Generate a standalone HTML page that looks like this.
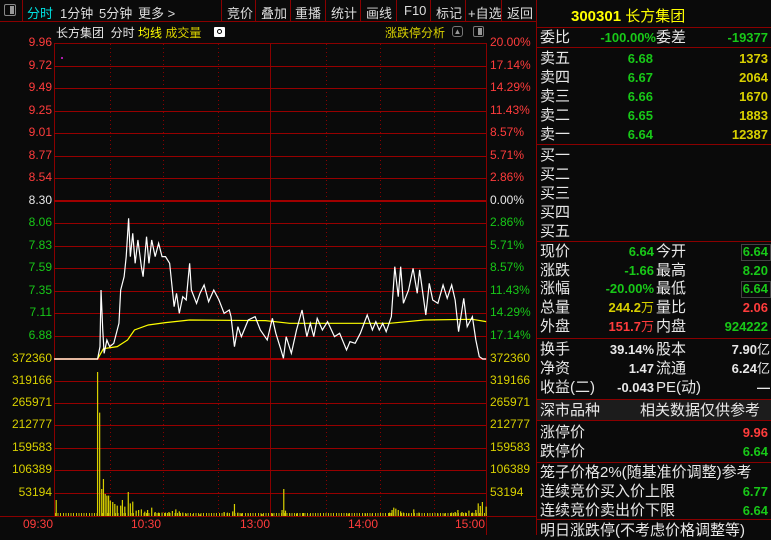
<!DOCTYPE html><html><head><meta charset="utf-8"><style>
*{margin:0;padding:0;box-sizing:border-box}
body{width:771px;height:535px;background:#0a0a0a;overflow:hidden;position:relative;font-family:"Liberation Sans","WenQuanYi Zen Hei","Noto Sans CJK SC",sans-serif;color:#ddd}
.a{position:absolute;white-space:nowrap}
.tb{font-size:13px;color:#ddd;top:3px}
.vl{position:absolute;width:1px;background:#8a0000}
.hl{position:absolute;height:1px;background:#8a0000}
.L{font-size:12px;text-align:right;width:52px;left:0}
.R{font-size:12px;left:490px}
.g{color:#18c818}.r{color:#ff3c3c}.y{color:#d8d000}.w{color:#e8e8e8}.c{color:#00e0e0}
.p{font-size:15px;position:absolute;white-space:nowrap;line-height:19px}
.b{font-weight:bold}
</style></head><body>
<div class="hl" style="left:0;top:21px;width:537px"></div>
<div class="a" style="left:4px;top:4px;width:12px;height:12px;border:1px solid #888;border-radius:2px"><div style="position:absolute;right:1px;top:1px;width:4px;height:8px;background:#999"></div></div>
<div class="vl" style="left:22px;top:0;height:21px"></div>
<div class="a tb c" style="left:27px">分时</div>
<div class="a tb" style="left:60px">1分钟</div>
<div class="a tb" style="left:99px">5分钟</div>
<div class="a tb" style="left:138px">更多 &gt;</div>
<div class="vl" style="left:221px;top:0;height:21px"></div>
<div class="a tb" style="left:227px">竞价</div>
<div class="vl" style="left:255px;top:0;height:21px"></div>
<div class="a tb" style="left:261px">叠加</div>
<div class="vl" style="left:290px;top:0;height:21px"></div>
<div class="a tb" style="left:295px">重播</div>
<div class="vl" style="left:325px;top:0;height:21px"></div>
<div class="a tb" style="left:331px">统计</div>
<div class="vl" style="left:360px;top:0;height:21px"></div>
<div class="a tb" style="left:366px">画线</div>
<div class="vl" style="left:396px;top:0;height:21px"></div>
<div class="a tb" style="left:404px">F10</div>
<div class="vl" style="left:430px;top:0;height:21px"></div>
<div class="a tb" style="left:436px">标记</div>
<div class="vl" style="left:465px;top:0;height:21px"></div>
<div class="a tb" style="left:468px">+自选</div>
<div class="vl" style="left:501px;top:0;height:21px"></div>
<div class="a tb" style="left:507px">返回</div>
<div class="vl" style="left:536px;top:0;height:535px"></div>
<div class="a" style="left:56px;top:24px;font-size:12px;color:#e8e8e8">长方集团&nbsp; 分时 <span style="color:#ffff00">均线</span> <span class="y">成交量</span></div>
<div class="a" style="left:214px;top:27px;width:11px;height:10px;background:#fff;border-radius:1px"><div style="position:absolute;left:3px;top:2px;width:5px;height:5px;border:1px solid #000;border-radius:50%"></div></div>
<div class="a y" style="left:385px;top:24px;font-size:12px">涨跌停分析</div>
<div class="a" style="left:452px;top:26px;width:11px;height:11px;border:1px solid #777;border-radius:3px;font-size:8px;color:#999;text-align:center;line-height:9px">▲</div>
<div class="a" style="left:473px;top:26px;width:11px;height:11px;border:1px solid #777;border-radius:2px"><div style="position:absolute;right:1px;top:1px;width:4px;height:7px;background:#999"></div></div>
<div class="vl" style="left:54px;top:43px;height:473px"></div>
<div class="vl" style="left:486px;top:43px;height:492px"></div>
<div class="vl" style="left:270px;top:43px;height:473px"></div>
<div class="hl" style="left:54px;top:43px;width:432px"></div>
<div class="hl" style="left:0;top:516px;width:537px"></div>
<svg class="a" style="left:0;top:0" width="537" height="535">
<g stroke="#8a0000" stroke-width="1" stroke-dasharray="1,3">
<line x1="110.5" y1="44" x2="110.5" y2="516"/><line x1="163.5" y1="44" x2="163.5" y2="516"/><line x1="218.5" y1="44" x2="218.5" y2="516"/><line x1="326.5" y1="44" x2="326.5" y2="516"/><line x1="380.5" y1="44" x2="380.5" y2="516"/><line x1="434.5" y1="44" x2="434.5" y2="516"/>
</g>
<g stroke="#960000" stroke-width="1">
<line x1="54" y1="66.5" x2="486" y2="66.5"/><line x1="54" y1="88.5" x2="486" y2="88.5"/><line x1="54" y1="111.5" x2="486" y2="111.5"/><line x1="54" y1="133.5" x2="486" y2="133.5"/><line x1="54" y1="156.5" x2="486" y2="156.5"/><line x1="54" y1="178.5" x2="486" y2="178.5"/>
<line x1="54" y1="223.5" x2="486" y2="223.5"/><line x1="54" y1="246.5" x2="486" y2="246.5"/><line x1="54" y1="268.5" x2="486" y2="268.5"/><line x1="54" y1="291.5" x2="486" y2="291.5"/><line x1="54" y1="313.5" x2="486" y2="313.5"/><line x1="54" y1="336.5" x2="486" y2="336.5"/>
<line x1="54" y1="381.5" x2="486" y2="381.5"/><line x1="54" y1="403.5" x2="486" y2="403.5"/><line x1="54" y1="425.5" x2="486" y2="425.5"/><line x1="54" y1="448.5" x2="486" y2="448.5"/><line x1="54" y1="470.5" x2="486" y2="470.5"/><line x1="54" y1="493.5" x2="486" y2="493.5"/>
</g>
<g stroke="#a00000" stroke-width="2"><line x1="54" y1="201" x2="486" y2="201"/><line x1="54" y1="359" x2="486" y2="359"/></g>
<circle cx="62" cy="58" r="1" fill="#e020e0"/>
<g transform="translate(0,190) scale(0.3448,0.3333)" fill="none">
<polyline vector-effect="non-scaling-stroke" stroke-width="1.2" stroke="#ffff00" points="157,507 283,507 300,476 340,470 370,450 390,420 430,405 480,398 550,390 770,392 840,400 1130,400 1230,390 1370,388 1410,395"/>
<polyline vector-effect="non-scaling-stroke" stroke-width="1.2" stroke="#fff" points="157,507 283,507 290,470 293,300 298,420 302,490 310,450 318,470 330,460 345,400 350,300 360,260 366,200 373,85 378,200 385,130 392,220 400,150 410,230 415,260 425,140 432,220 440,150 450,200 460,160 470,200 480,200 492,220 500,300 505,350 512,310 520,370 530,320 540,330 550,220 555,300 570,340 580,310 592,285 605,335 620,300 635,330 650,370 665,360 670,380 680,470 690,410 700,440 720,390 740,380 755,420 775,450 790,385 800,430 815,480 822,505 830,440 845,490 860,420 876,360 890,440 900,400 910,440 920,385 935,420 950,395 970,440 985,430 1005,480 1015,455 1030,460 1045,430 1065,375 1080,420 1090,395 1100,420 1110,400 1120,425 1135,380 1145,230 1155,320 1162,230 1170,340 1185,300 1198,235 1210,310 1217,240 1235,375 1245,280 1255,330 1270,340 1285,285 1297,325 1310,285 1320,330 1330,425 1345,325 1355,410 1370,380 1380,450 1390,500 1400,507 1410,507"/>
</g>
<g transform="translate(0,360) scale(0.3448,0.3333)" stroke="#d8d000" stroke-width="3.5">
<path d="M163 468V420M283 468V36M289 468V158M295 468V387M300 468V357M305 468V402M310 468V407M315 468V407M320 468V422M327 468V426M333 468V432M340 468V437M350 468V437M355 468V420M362 468V440M372 468V396M378 468V430M385 468V425M395 468V452M402 468V450M410 468V448M420 468V455M428 468V450M440 468V443M450 468V456M460 468V458M470 468V458M480 468V458M490 468V456M500 468V453M510 468V448M520 468V454M530 468V458M540 468V461M560 468V462M580 468V463M650 468V456M660 468V458M675 468V454M680 468V432M690 468V458M700 468V460M720 468V460M760 468V462M790 468V460M818 468V450M823 468V387M828 468V452M840 468V460M860 468V460M880 468V459M900 468V462M1010 468V460M1060 468V460M1080 468V461M1130 468V458M1137 468V450M1142 468V443M1148 468V446M1155 468V450M1162 468V454M1170 468V458M1185 468V460M1200 468V448M1215 468V458M1240 468V460M1270 468V460M1290 468V460M1310 468V458M1320 468V456M1328 468V450M1340 468V456M1350 468V458M1360 468V452M1370 468V458M1380 468V450M1387 468V430M1393 468V438M1399 468V426M1410 468V440"/>
</g>
</svg>
<div class="a" style="left:55px;top:513px;width:431px;height:3px;background:repeating-linear-gradient(90deg,#c8c000 0 1px,transparent 1px 2.6px)"></div>
<div class="a L r" style="top:35px">9.96</div><div class="a L r" style="top:58px">9.72</div><div class="a L r" style="top:80px">9.49</div><div class="a L r" style="top:103px">9.25</div><div class="a L r" style="top:125px">9.01</div><div class="a L r" style="top:148px">8.77</div><div class="a L r" style="top:170px">8.54</div>
<div class="a L w" style="top:193px">8.30</div>
<div class="a L g" style="top:215px">8.06</div><div class="a L g" style="top:238px">7.83</div><div class="a L g" style="top:260px">7.59</div><div class="a L g" style="top:283px">7.35</div><div class="a L g" style="top:305px">7.11</div><div class="a L g" style="top:328px">6.88</div>
<div class="a L y" style="top:351px">372360</div><div class="a L y" style="top:373px">319166</div><div class="a L y" style="top:395px">265971</div><div class="a L y" style="top:417px">212777</div><div class="a L y" style="top:440px">159583</div><div class="a L y" style="top:462px">106389</div><div class="a L y" style="top:485px">53194</div>
<div class="a R r" style="top:35px">20.00%</div><div class="a R r" style="top:58px">17.14%</div><div class="a R r" style="top:80px">14.29%</div><div class="a R r" style="top:103px">11.43%</div><div class="a R r" style="top:125px">8.57%</div><div class="a R r" style="top:148px">5.71%</div><div class="a R r" style="top:170px">2.86%</div>
<div class="a R w" style="top:193px">0.00%</div>
<div class="a R g" style="top:215px">2.86%</div><div class="a R g" style="top:238px">5.71%</div><div class="a R g" style="top:260px">8.57%</div><div class="a R g" style="top:283px">11.43%</div><div class="a R g" style="top:305px">14.29%</div><div class="a R g" style="top:328px">17.14%</div>
<div class="a R y" style="top:351px">372360</div><div class="a R y" style="top:373px">319166</div><div class="a R y" style="top:395px">265971</div><div class="a R y" style="top:417px">212777</div><div class="a R y" style="top:440px">159583</div><div class="a R y" style="top:462px">106389</div><div class="a R y" style="top:485px">53194</div>
<div class="a r" style="left:23px;top:517px;font-size:12px">09:30</div>
<div class="a r" style="left:131px;top:517px;font-size:12px">10:30</div>
<div class="a r" style="left:240px;top:517px;font-size:12px">13:00</div>
<div class="a r" style="left:348px;top:517px;font-size:12px">14:00</div>
<div class="a r" style="left:455px;top:517px;font-size:12px">15:00</div>
<div class="a b" style="left:571px;top:5px;font-size:15px;color:#ffff00">300301 <span style="font-weight:normal">长方集团</span></div>
<div class="hl" style="left:537px;top:27px;width:234px"></div>
<div class="hl" style="left:537px;top:47px;width:234px"></div>
<div class="hl" style="left:537px;top:144px;width:234px"></div>
<div class="hl" style="left:537px;top:241px;width:234px"></div>
<div class="hl" style="left:537px;top:338px;width:234px"></div>
<div class="hl" style="left:537px;top:399px;width:234px"></div>
<div class="a" style="left:537px;top:400px;width:234px;height:20px;background:#1c1c1c"></div>
<div class="hl" style="left:537px;top:420px;width:234px"></div>
<div class="hl" style="left:537px;top:462px;width:234px"></div>
<div class="hl" style="left:537px;top:519px;width:234px"></div>
<div class="p w" style="left:540px;top:28px">委比</div><div class="p g b" style="left:586px;top:28px;width:70px;text-align:right;font-size:13px">-100.00%</div><div class="p w" style="left:656px;top:28px">委差</div><div class="p g b" style="left:700px;top:28px;width:68px;text-align:right;font-size:13px">-19377</div>
<div class="p w" style="left:540px;top:49px">卖五<br>卖四<br>卖三<br>卖二<br>卖一</div>
<div class="p g b" style="left:600px;top:49px;width:53px;text-align:right;font-size:13px">6.68<br>6.67<br>6.66<br>6.65<br>6.64</div>
<div class="p y b" style="left:690px;top:49px;width:78px;text-align:right;font-size:13px">1373<br>2064<br>1670<br>1883<br>12387</div>
<div class="p w" style="left:540px;top:146px">买一<br>买二<br>买三<br>买四<br>买五</div>
<div class="p w" style="left:540px;top:243px;line-height:18.7px">现价<br>涨跌<br>涨幅<br>总量<br>外盘</div>
<div class="p w" style="left:656px;top:243px;line-height:18.7px">今开<br>最高<br>最低<br>量比<br>内盘</div>
<div class="p b" style="left:586px;top:243px;width:68px;text-align:right;font-size:13px;line-height:18.7px"><span class="g">6.64</span><br><span class="g">-1.66</span><br><span class="g">-20.00%</span><br><span class="y">244.2<span style="font-weight:normal">万</span></span><br><span class="r">151.7<span style="font-weight:normal">万</span></span></div>
<div class="p b" style="left:690px;top:243px;width:78px;text-align:right;font-size:13px;line-height:18.7px"><span class="g">6.64</span><br><span class="g">8.20</span><br><span class="g">6.64</span><br><span class="r">2.06</span><br><span class="g">924222</span></div>
<div class="a" style="left:741px;top:244px;width:30px;height:17px;border:1px solid #444"></div>
<div class="a" style="left:741px;top:281px;width:30px;height:17px;border:1px solid #444"></div>
<div class="p w" style="left:540px;top:340px">换手<br>净资<br>收益(二)</div>
<div class="p w b" style="left:586px;top:340px;width:68px;text-align:right;font-size:13px">39.14%<br>1.47<br>-0.043</div>
<div class="p w" style="left:656px;top:340px">股本<br>流通<br>PE(动)</div>
<div class="p w b" style="left:690px;top:340px;width:80px;text-align:right;font-size:13px">7.90<span style="font-weight:normal">亿</span><br>6.24<span style="font-weight:normal">亿</span><br>—</div>
<div class="p w" style="left:540px;top:401px">深市品种</div><div class="p w" style="left:640px;top:401px">相关数据仅供参考</div>
<div class="p w" style="left:540px;top:423px">涨停价<br>跌停价</div>
<div class="p b" style="left:700px;top:423px;width:68px;text-align:right;font-size:13px"><span class="r">9.96</span><br><span class="g">6.64</span></div>
<div class="p w" style="left:540px;top:463px">笼子价格2%(随基准价调整)参考<br>连续竞价买入价上限<br>连续竞价卖出价下限</div>
<div class="p g b" style="left:700px;top:482px;width:68px;text-align:right;font-size:13px">6.77<br>6.64</div>
<div class="p w" style="left:540px;top:521px">明日涨跌停(不考虑价格调整等)</div>
</body></html>
